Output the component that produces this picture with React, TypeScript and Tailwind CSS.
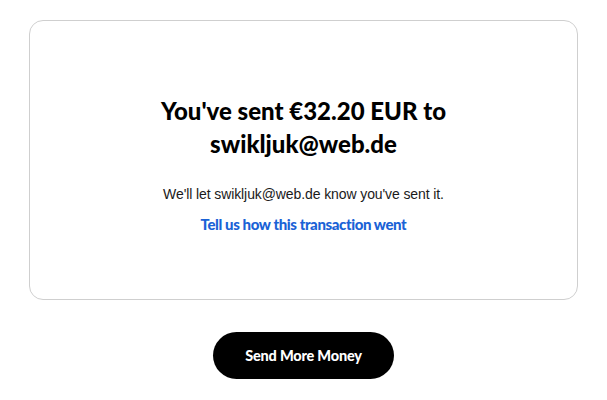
export default function App() {
  return (
    <div className="w-[607px] h-[400px] bg-white flex flex-col items-center pt-[20px]">
      <div className="w-[549px] h-[280px] rounded-[14px] border border-[#cfcfcf] flex flex-col items-center justify-center pt-[6px]">
        <h1 className="font-['Lato',sans-serif] text-[24px] leading-[33px] font-black text-black text-center">
          You've sent €32.20 EUR to
          <br />
          swikljuk@web.de
        </h1>
        <p className="mt-[25px] font-['Liberation_Sans',Arial,sans-serif] text-[14px] leading-[18px] text-[#1a1a1a] text-center tracking-[-0.1px]">
          We'll let swikljuk@web.de know you've sent it.
        </p>
        <a className="mt-[12px] font-['Lato',sans-serif] text-[15px] leading-[18px] font-black text-[#1a62d6] tracking-[-0.4px]">
          Tell us how this transaction went
        </a>
      </div>
      <button className="mt-[32px] w-[181px] h-[47px] rounded-full bg-black text-white font-['Lato',sans-serif] text-[14.5px] font-black tracking-[-0.2px]">
        Send More Money
      </button>
    </div>
  );
}
